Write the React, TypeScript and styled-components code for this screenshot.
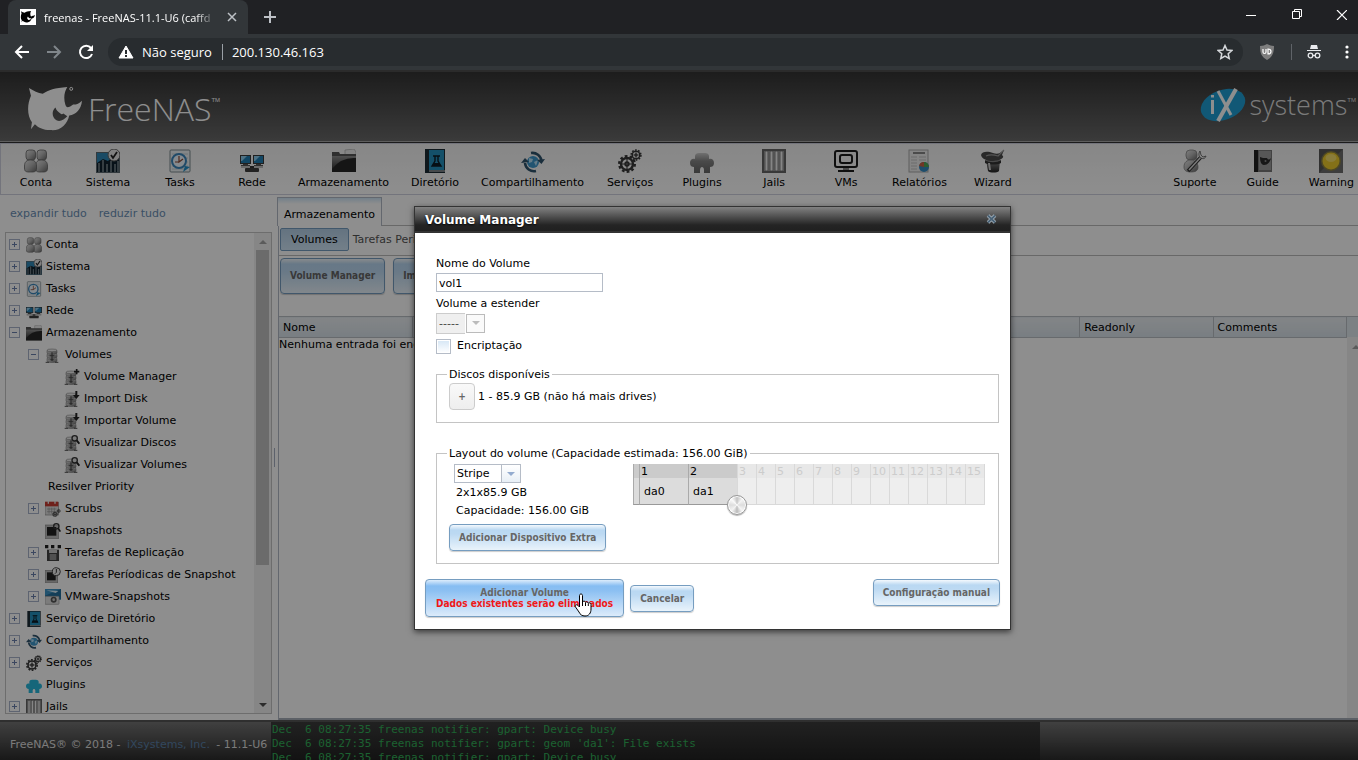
import React from 'react';
import styled, { createGlobalStyle, css } from 'styled-components';

const GlobalStyle = createGlobalStyle`
  *, *::before, *::after { box-sizing: border-box; }
  html, body { margin: 0; height: 100%; }
  body { overflow: hidden; background: #202124; }
  #root { height: 100%; }
  button, input, select { font: inherit; color: inherit; }
  fieldset, legend { margin: 0; }
`;

/* ---------- icons ---------- */

type IconName =
  | 'users' | 'system' | 'tasks' | 'network' | 'folder' | 'book' | 'share' | 'gears'
  | 'plugin' | 'pluginBlue' | 'jails' | 'vm' | 'report' | 'wizard' | 'support' | 'guide' | 'warning'
  | 'disks' | 'disksAdd' | 'disksDown' | 'disksFind' | 'scrubs' | 'snapshot'
  | 'replication' | 'periodic' | 'vmware';

const Person = ({ x }: { x: number }) => (
  <g transform={`translate(${x} 0)`}>
    <rect x="1.500" y="1" width="9.500" height="10" rx="3" fill="url(#silver)" stroke="#666" strokeWidth=".8" />
    <path d="M0 17c0-4 2-6 6-6s6 2 6 6v2c0 4-2 4-6 4s-6 0-6-4z" fill="url(#silver)" stroke="#666" strokeWidth=".8" />
  </g>
);

const Gear = ({ x, y, r }: { x: number; y: number; r: number }) => (
  <g fill="none" stroke="#383838">
    <circle cx={x} cy={y} r={r} strokeWidth={r * 0.4} />
    <circle cx={x} cy={y} r={r * 1.3} strokeWidth={r * 0.4} strokeDasharray={`${r * 0.45} ${r * 0.366}`} />
    <circle cx={x} cy={y} r={r * 0.3} strokeWidth={r * 0.3} />
    <path d={`M${x - r} ${y}H${x + r}M${x} ${y - r}V${y + r}`} strokeWidth={r * 0.18} />
  </g>
);

const Monitor = ({ x }: { x: number }) => (
  <g transform={`translate(${x} 6)`}>
    <rect width="11" height="9" fill="#3a3a3a" />
    <rect x="1" y="1" width="9" height="7" fill="#1f7fb4" />
    <path d="M1 1h6L2 6H1z" fill="#8ccbee" />
    <path d="M3 9h5v1h2v1H1v-1h2z" fill="#555" />
  </g>
);

const Disks = () => (
  <g>
    {[17, 11, 5].map((y) => (
      <g key={y}>
        <path d={`M3 ${y}v4c0 3 15 3 15 0v-4`} fill="url(#silver)" stroke="#777" strokeWidth=".8" />
        <ellipse cx="10.500" cy={y} rx="7.500" ry="2" fill="#eee" stroke="#777" strokeWidth=".8" />
      </g>
    ))}
    <path d="M10.500 8v13M7 13h7M8 19h5" stroke="#444" strokeWidth="1.600" />
    <path d="M1 23h5M15 23h5" stroke="#555" strokeWidth="1.500" />
  </g>
);

const PluginShape = ({ fill }: { fill: string }) => (
  <path d="M5 10V7c0-2 2-3 4-3h6c2 0 4 1 4 3v3c3-1 5 1 5 4s-2 4-4 4v6h-6v-3c0-4-4-4-4 0v3H4v-6c-2 0-4-1-4-4s2-5 5-4z" fill={fill} />
);

const drawings: Record<IconName, React.ReactNode> = {
  users: <><Person x={11.5} /><Person x={.5} /></>,
  system: (
    <>
      <rect y="3" width="24" height="21" fill="#5d6970" />
      <rect x="1" y="4" width="22" height="19" fill="#2f88b5" />
      <path d="M1 14l6-4 5 2 5-5 6 2v14H1z" fill="#10222d" />
      <path d="M3 23v-9M7 23v-12M11 23v-8M15 23v-11M19 23v-8M22 23v-11" stroke="#aebbc2" strokeWidth="1" />
      <circle cx="18" cy="6" r="6" fill="#e6e6e6" stroke="#666" />
      <path d="M15 6l2 3 4-6" stroke="#222" strokeWidth="1.800" fill="none" />
    </>
  ),
  tasks: (
    <>
      <rect x="2" y="1" width="20" height="22" rx="1" fill="#eef3f5" stroke="#7d8b90" />
      <path d="M4 5h16M4 9h16M4 13h16M4 17h16M4 20h12" stroke="#c4d0d6" />
      <circle cx="11" cy="12" r="7" fill="#eff8ff" stroke="#3b86bb" strokeWidth="2" />
      <path d="M11 7v6l4-3M11 13H7" stroke="#8c4b36" strokeWidth="1.200" fill="none" />
      <path d="M15 23l2-6 5 1z" fill="#238fc8" />
    </>
  ),
  network: (
    <>
      <Monitor x={0} /><Monitor x={13} />
      <path d="M1 18h22" stroke="#888" />
      <rect x="5" y="19" width="14" height="4" rx="1" fill="#3e3e3e" />
      <path d="M10 18h4" stroke="#333" strokeWidth="2" />
    </>
  ),
  folder: (
    <>
      <path d="M13 1l9-1 2 3v7H13z" fill="#ececec" stroke="#aaa" strokeWidth=".7" />
      <path d="M0 3h7l1 2h16v18H0z" fill="#555" />
      <path d="M0 23V7h24v16z" fill="url(#dark)" />
      <path d="M0 20Q9 8 24 9v14H0z" fill="#262626" />
    </>
  ),
  book: (
    <>
      <rect x="2" width="20" height="24" fill="#1c2b35" />
      <rect x="6" y="1" width="15" height="20" fill="#2590bd" />
      <path d="M6 22h16" stroke="#ddd" />
      <path d="M10 7h7M12 7v5l-3 5h9l-3-5V7" stroke="#0c1c26" strokeWidth="1.400" fill="none" />
      <path d="M11 14h5l2 3H9z" fill="#0c1c26" />
    </>
  ),
  share: (
    <>
      <circle cx="12" cy="13" r="6" fill="#3d98cc" />
      <path d="M8 9l4 1-1 3-3 1zM13 13l4-2-2 6z" fill="#b5def4" />
      <path d="M10 4a9 9 0 0 1 10.500 8" fill="none" stroke="#30546d" strokeWidth="2.600" />
      <path d="M24 10l-3.500 5-4.500-4z" fill="#30546d" />
      <path d="M15 22A9 9 0 0 1 4 14" fill="none" stroke="#30546d" strokeWidth="2.600" />
      <path d="M0 14l4-5 4 4z" fill="#30546d" />
    </>
  ),
  gears: <><Gear x={9} y={15} r={6} /><Gear x={18} y={6} r={3.800} /></>,
  plugin: <PluginShape fill="url(#silverDark)" />,
  pluginBlue: <PluginShape fill="#28b8dc" />,
  jails: (
    <>
      <rect width="24" height="24" fill="#666" />
      <rect x="2" y="2" width="20" height="20" fill="#b5b5b5" />
      {[3, 8, 13, 18].map((x) => <rect key={x} x={x} y="2" width="3" height="20" fill="#efefef" stroke="#666" strokeWidth=".8" />)}
    </>
  ),
  vm: (
    <g fill="none" stroke="#1b1b1b">
      <rect x="1" y="2" width="22" height="16" rx="2" strokeWidth="2" />
      <rect x="6" y="6" width="12" height="8" rx="2" strokeWidth="2" />
      <path d="M4 22h16" strokeWidth="2" /><path d="M9 20h6" strokeWidth="1" />
    </g>
  ),
  report: (
    <>
      <rect x="2" y="1" width="19" height="22" fill="#ededed" stroke="#aaa" />
      <path d="M6 4h12" stroke="#888" strokeWidth="2" />
      <path d="M4 8h6M12 8h7M4 11h6M12 11h7M4 14h6M4 17h6M4 20h6" stroke="#c2c2c2" />
      <circle cx="17" cy="18" r="5" fill="#368ac1" />
      <path d="M17 18v-5a5 5 0 0 1 5 5z" fill="#53a857" />
      <path d="M17 18l-5-1a5 5 0 0 1 5-4z" fill="#cc6144" />
    </>
  ),
  wizard: (
    <>
      <path d="M5 11l2 11c2 2 9 2 11 0l1-11z" fill="url(#dark)" />
      <path d="M4 11c4 3 12 3 16 0v3c-4 2-12 2-16 0z" fill="#333" />
      <path d="M0 6c1-4 7-4 12-2s7 0 11-3l-2 5c4 3-3 6-9 6S1 10 0 6z" fill="#4a4a4a" />
      <path d="M5 7c4-2 9-1 12 0l6-6" fill="none" stroke="#999" strokeWidth="1.200" />
      <path d="M7 14l1 7h2l-1-7z" fill="#ccc" />
    </>
  ),
  support: (
    <>
      <rect x="3" y="1" width="11" height="10" rx="4" fill="url(#silver)" stroke="#777" strokeWidth=".7" />
      <path d="M1 18c0-5 3-7 7-7s7 3 7 7-3 5-7 5-7-1-7-5z" fill="url(#silver)" stroke="#777" strokeWidth=".7" />
      <path d="M5 22L18 8" stroke="#333" strokeWidth="3.500" />
      <path d="M6 21L18 8" stroke="#ddd" strokeWidth="1.500" />
      <path d="M17 2c-2 3-1 6 1 7s4 1 5-2l-3 1-2-2z" fill="#eee" stroke="#555" strokeWidth=".8" />
    </>
  ),
  guide: (
    <>
      <rect x="3" y="1" width="18" height="22" fill="#777" />
      <rect x="3" y="1" width="4" height="22" fill="#222" />
      <rect x="8" y="2" width="12" height="19" fill="#9c9c9c" />
      <path d="M9 8l3 1h4c1 2 2 2 4 0-1 4-3 7-7 7-3 0-4-4-4-8z" fill="#2a2a2a" />
      <circle cx="14.500" cy="12" r="1" fill="#888" />
    </>
  ),
  warning: (
    <>
      <rect width="24" height="24" fill="#565656" />
      <path d="M0 24L24 0v24z" fill="#6e6e6e" />
      <circle cx="12" cy="12" r="10" fill="#8b8142" />
      <circle cx="12" cy="12" r="8.500" fill="#edcb2b" />
      <ellipse cx="12" cy="9" rx="5.500" ry="4" fill="#f6de68" />
    </>
  ),
  disks: <Disks />,
  disksAdd: <><Disks /><path d="M19 0v8M15 4h8" stroke="#222" strokeWidth="2.500" /></>,
  disksDown: <><Disks /><path d="M17 0h3v6h3.500l-5 6-5-6H17z" fill="#222" /></>,
  disksFind: <><Disks /><circle cx="16" cy="5" r="4" fill="#ddd" stroke="#333" strokeWidth="2" /><path d="M19 8l4 5" stroke="#222" strokeWidth="3" /></>,
  scrubs: (
    <>
      <rect y="2" width="20" height="19" fill="#ddd" stroke="#888" />
      <rect y="1" width="20" height="7" fill="#c83c33" />
      <path d="M5 0v4M15 0v4" stroke="#eee" strokeWidth="2" />
      <path d="M3 12h14M3 16h14M6 10v9M10 10v9M14 10v9" stroke="#999" />
      <Gear x={15} y={20} r={2.800} /><Gear x={20.5} y={15} r={2} />
    </>
  ),
  snapshot: (
    <>
      <rect y="3" width="20" height="21" fill="#bbb" stroke="#888" />
      <rect x="3" y="6" width="14" height="13" fill="#222" />
      <circle cx="17" cy="5" r="4" fill="none" stroke="#333" strokeWidth="2" /><path d="M20 8l3 5" stroke="#222" strokeWidth="2.500" />
    </>
  ),
  replication: (
    <>
      <path d="M0 0h5v5H0zM9 0h5v5H9zM19 0h5v5h-5z" fill="#222" />
      <path d="M3 7h18v17H3z" fill="#444" />
      <path d="M6 7h12v5H6z" fill="#ccc" />
      <path d="M7 15h10M7 18h10M7 21h10" stroke="#ddd" strokeWidth="1.500" />
    </>
  ),
  periodic: (
    <>
      <rect y="5" width="19" height="19" fill="#bbb" stroke="#888" />
      <rect x="3" y="8" width="13" height="12" fill="#222" />
      <circle cx="17" cy="7" r="6" fill="#eee" stroke="#444" strokeWidth="1.500" /><path d="M17 3v5l-2 2" stroke="#333" strokeWidth="1.500" fill="none" />
    </>
  ),
  vmware: (
    <>
      <rect width="24" height="16" fill="#246f9e" /><path d="M0 0h24L0 10z" fill="#3d94c6" /><path d="M2 2l18 1-4 3z" fill="#d7eef9" />
      <rect y="11" width="21" height="12" rx="1" fill="#dedede" stroke="#999" />
      <circle cx="13" cy="16" r="4.500" fill="#555" /><circle cx="13" cy="16" r="2" fill="#ccc" />
    </>
  ),
};

const IconSvg = styled.svg<{ $size: number }>`
  display: block;
  flex: none;
  width: ${(p) => p.$size}px;
  height: ${(p) => p.$size}px;
`;

const Icon = ({ name, size = 24 }: { name: IconName; size?: number }) => (
  <IconSvg $size={size} viewBox="0 0 24 24" aria-hidden="true">{drawings[name]}</IconSvg>
);

const HiddenDefs = styled.svg`
  position: absolute;
  width: 0;
  height: 0;
`;

const Gradients = () => (
  <HiddenDefs aria-hidden="true">
    <defs>
      <linearGradient id="silver" x1="0" y1="0" x2="1" y2="1">
        <stop offset="0" stopColor="#e4e4e4" /><stop offset=".5" stopColor="#b4b4b4" /><stop offset="1" stopColor="#666" />
      </linearGradient>
      <linearGradient id="silverDark" x1="0" y1="0" x2="0" y2="1">
        <stop offset="0" stopColor="#c9c9c9" /><stop offset=".4" stopColor="#858585" /><stop offset="1" stopColor="#666" />
      </linearGradient>
      <linearGradient id="dark" x1="0" y1="0" x2="0" y2="1">
        <stop offset="0" stopColor="#909090" /><stop offset="1" stopColor="#222" />
      </linearGradient>
    </defs>
  </HiddenDefs>
);

/* ---------- browser window ---------- */

const Window = styled.div`
  display: flex;
  flex-direction: column;
  height: 100vh;
  font-family: 'Open Sans', 'Noto Sans', sans-serif;
  color: #fff;
`;

const PlainButton = styled.button`
  display: flex;
  align-items: center;
  justify-content: center;
  padding: 0;
  border: 0;
  background: none;
  svg { display: block; }
`;

const TabStrip = styled.div`
  display: flex;
  flex: none;
  height: 34px;
  padding-left: 8px;
  background: #202124;
`;

const BrowserTab = styled.div`
  display: flex;
  align-items: center;
  width: 240px;
  padding: 0 8px 0 12px;
  gap: 8px;
  border-radius: 8px 8px 0 0;
  background: #323639;
  font-size: 11px;
`;

const Favicon = styled.svg`
  flex: none;
  width: 16px;
  height: 16px;
  background: #fff;
`;

const TabTitle = styled.span`
  flex: 1;
  overflow: hidden;
  white-space: nowrap;
  mask-image: linear-gradient(90deg, #000 88%, transparent);
`;

const IconButton = styled(PlainButton)<{ $w: number }>`
  width: ${(p) => p.$w}px;
  flex: none;
`;

const WindowControls = styled.div`
  display: flex;
  margin-left: auto;
  height: 29px;
`;

const AddressRow = styled.div`
  display: flex;
  flex: none;
  align-items: center;
  height: 36px;
  padding-left: 6px;
  background: #323639;
`;

const AddressBar = styled.div`
  display: flex;
  flex: 1;
  align-items: center;
  height: 28px;
  margin-left: 6px;
  padding: 0 8px 0 10px;
  border-radius: 14px;
  background: #282c2f;
  font-size: 13px;
`;

const NotSecure = styled.label`
  display: flex;
  align-items: center;
  gap: 8px;
  padding-right: 10px;
  border-right: 1px solid #9aa0a6;
  line-height: 16px;
`;

const AddressInput = styled.input`
  flex: 1;
  min-width: 0;
  margin-left: 9px;
  padding: 0;
  border: 0;
  outline: 0;
  background: none;
`;

const Separator = styled.span`
  width: 1px;
  height: 16px;
  background: #5f6368;
`;

const SharkMark = 'M1 1c5 3 9 5 14 6C21 3 27 1 40 0c-3 5-4 11-2 18 1 3 2 3 5 2l3-2c4 0 6-1 9-4-1 9-6 14-13 15-2 9-9 16-19 15-8 0-13-3-16-6l-4 5 1-7C-1 29-1 18 3 9zM28 21c-4 3-4 10 1 13 4 2 8-1 11-4l-4-3c-1 1-2 1-3 0-3-2-4-3-5-6z';

const BrowserChrome = () => (
  <>
    <TabStrip>
      <BrowserTab>
        <Favicon viewBox="-3 -3 62 52" aria-hidden="true"><path d={SharkMark} fill="#000" fillRule="evenodd" /></Favicon>
        <TabTitle>freenas - FreeNAS-11.1-U6 (caffd</TabTitle>
        <IconButton $w={16} aria-label="Fechar guia">
          <svg width="16" height="16"><path d="M4 4l8 8M12 4l-8 8" stroke="#bdc1c6" strokeWidth="1.500" /></svg>
        </IconButton>
      </BrowserTab>
      <IconButton $w={44} aria-label="Nova guia">
        <svg width="14" height="14"><path d="M7 1v12M1 7h12" stroke="#bdc1c6" strokeWidth="2" /></svg>
      </IconButton>
      <WindowControls>
        <IconButton $w={46} aria-label="Minimizar"><svg width="10" height="10"><path d="M0 5.500h10" stroke="#fff" /></svg></IconButton>
        <IconButton $w={46} aria-label="Restaurar"><svg width="11" height="11"><path d="M.5 2.500h7v7h-7zM2.500 2.500v-2h7v7h-2" fill="none" stroke="#fff" /></svg></IconButton>
        <IconButton $w={38} aria-label="Fechar"><svg width="16" height="10"><path d="M6 0l10 10M16 0L6 10" stroke="#fff" strokeWidth="1.200" /></svg></IconButton>
      </WindowControls>
    </TabStrip>
    <AddressRow>
      <IconButton $w={32} aria-label="Voltar"><svg width="16" height="16"><path d="M15 8H2M8 2L2 8l6 6" fill="none" stroke="#fff" strokeWidth="2" /></svg></IconButton>
      <IconButton $w={32} aria-label="Avançar"><svg width="16" height="16"><path d="M1 8h13M8 2l6 6-6 6" fill="none" stroke="#80868b" strokeWidth="2" /></svg></IconButton>
      <IconButton $w={32} aria-label="Recarregar"><svg width="16" height="16"><path d="M13 4a6.200 6.200 0 1 0 1 6" fill="none" stroke="#fff" strokeWidth="2" /><path d="M15 1v6H9z" fill="#fff" /></svg></IconButton>
      <AddressBar>
        <NotSecure htmlFor="address">
          <svg width="16" height="14"><path d="M8 1l7 12H1z" fill="#fff" stroke="#fff" /><path d="M8 5v4M8 10v2" stroke="#282c2f" strokeWidth="2" /></svg>
          Não seguro
        </NotSecure>
        <AddressInput id="address" defaultValue="200.130.46.163" />
        <IconButton $w={20} aria-label="Favoritar"><svg width="16" height="16"><path d="M8 1.500l2 4.500 4.800.5-3.600 3.200 1 4.800L8 12l-4.200 2.500 1-4.800L1.200 6.500 6 6z" fill="none" stroke="#d5d8db" strokeWidth="1.500" /></svg></IconButton>
      </AddressBar>
      <IconButton $w={48} aria-label="uBlock">
        <svg width="16" height="16"><path d="M1 2c3 0 5-1 7-2 2 1 4 2 7 2 0 8-2 11-7 14C3 13 1 10 1 2z" fill="#7e7e7e" /><path d="M4 5v3c0 2 3 2 3 0V5M9 5v5c4 0 4-5 0-5z" fill="none" stroke="#fff" strokeWidth="1.200" /></svg>
      </IconButton>
      <Separator />
      <IconButton $w={44} aria-label="Navegação anônima">
        <svg width="16" height="16"><path d="M5 1h6l1 4H4zM1 6h14v1H1z" fill="#e8eaed" /><g fill="none" stroke="#e8eaed" strokeWidth="1.300"><circle cx="4.500" cy="11.500" r="2.300" /><circle cx="11.500" cy="11.500" r="2.300" /><path d="M6.800 11.500h2.400" /></g></svg>
      </IconButton>
      <IconButton $w={22} aria-label="Menu"><svg width="4" height="16"><circle cx="2" cy="3" r="1.600" fill="#fff" /><circle cx="2" cy="8" r="1.600" fill="#fff" /><circle cx="2" cy="13" r="1.600" fill="#fff" /></svg></IconButton>
    </AddressRow>
  </>
);

/* ---------- FreeNAS page ---------- */

const Page = styled.div`
  position: relative;
  display: flex;
  flex: 1;
  flex-direction: column;
  min-height: 0;
  background: #fff;
  color: #000;
  font: 11px/14px 'DejaVu Sans', sans-serif;
`;

const Banner = styled.header`
  display: flex;
  flex: none;
  justify-content: space-between;
  height: 73px;
  padding: 14px 2px 0 28px;
  border-top: 2px solid #4e4e4e;
  border-bottom: 1px solid #333;
  background: linear-gradient(#343434, #6a6a6a);
  box-shadow: inset 0 -1px #aaa;
`;

const Brand = styled.a`
  display: flex;
  gap: 5px;
  color: #fff;
  text-decoration: none;
  svg { display: block; }
`;

const BrandName = styled.span`
  display: flex;
  font: 300 32px/46px 'Open Sans', sans-serif;
`;

const PartnerName = styled(BrandName)`
  margin-left: -2px;
  line-height: 38px;
  font-size: 27px;
  color: #ddd;
`;

const Trade = styled.sup`
  font: 6px/28px 'Liberation Sans', sans-serif;
`;

const MenuBar = styled.nav`
  display: flex;
  flex: none;
  justify-content: space-between;
  height: 52px;
  border: 1px solid #cfd1de;
  border-right: 0;
  background: linear-gradient(#f3f3f3, #fff);
`;

const MenuGroup = styled.div<{ $end?: boolean }>`
  display: flex;
  ${(p) => p.$end ? css`gap: 30px; padding-right: 4px;` : css`margin-left: -1px;`}
`;

const MenuItem = styled.button<{ $end?: boolean }>`
  display: flex;
  flex-direction: column;
  align-items: center;
  gap: 3px;
  min-width: ${(p) => (p.$end ? 0 : 72)}px;
  padding: 5px ${(p) => (p.$end ? 0 : 10)}px 0;
  border: 0;
  background: none;
`;

const Main = styled.div`
  display: flex;
  flex: 1;
  min-height: 0;
`;

const Sidebar = styled.aside`
  display: flex;
  flex: none;
  flex-direction: column;
  width: 272px;
  padding: 0 0 6px 5px;
`;

const TreeLinks = styled.div`
  display: flex;
  flex: none;
  gap: 12px;
  height: 37px;
  padding: 12px 0 0 5px;
`;

const Link = styled.a`
  color: #6a8fb5;
  text-decoration: none;
`;

const TreeBox = styled.div`
  display: flex;
  flex: 1;
  min-height: 0;
  border: 1px solid #c4c4c4;
`;

const TreeList = styled.ul`
  flex: 1;
  margin: 0;
  padding: 0;
  overflow: hidden;
  list-style: none;
`;

const TreeRow = styled.li<{ $depth: number }>`
  display: flex;
  align-items: center;
  height: 22px;
  padding-left: ${(p) => 3 + p.$depth * 19}px;
  white-space: nowrap;
`;

const ExpanderSlot = styled.span`
  width: 17px;
  flex: none;
`;

const Expander = styled.button<{ $open?: boolean }>`
  display: block;
  width: 11px;
  height: 11px;
  padding: 0;
  border: 1px solid #aab4cc;
  background:
    linear-gradient(#6a80ad, #6a80ad) center / 5px 1px no-repeat,
    linear-gradient(#6a80ad, #6a80ad) center / ${(p) => (p.$open ? 0 : 1)}px 5px no-repeat,
    #fff;
`;

const TreeLabel = styled.span<{ $icon: boolean }>`
  padding: 2px 0 0 ${(p) => (p.$icon ? 4 : 3)}px;
`;

const TreeIcon = styled.span`
  padding-top: 2px;
`;

const ScrollTrack = styled.div`
  display: flex;
  flex: none;
  flex-direction: column;
  align-items: center;
  width: 17px;
  background: #f1f1f1;
`;

const ScrollArrow = styled.span<{ $down?: boolean }>`
  display: flex;
  align-items: center;
  justify-content: center;
  width: 17px;
  height: 17px;
  flex: none;
  &::before {
    content: '';
    border: 4px solid transparent;
    ${(p) => p.$down ? css`border-top-color: #505050; border-bottom: 0;` : css`border-bottom-color: #a3a3a3; border-top: 0;`}
  }
`;

const ScrollThumb = styled.div`
  flex: 316;
  width: 13px;
  background: #c1c1c1;
`;

const ScrollRest = styled.div`
  flex: 132;
`;

const Splitter = styled.div`
  display: flex;
  flex: none;
  align-items: center;
  justify-content: center;
  width: 5px;
  &::before {
    content: '';
    width: 1px;
    height: 19px;
    background: #a6aec0;
  }
`;

const Content = styled.main`
  display: flex;
  flex: 1;
  flex-direction: column;
  min-width: 0;
  padding-top: 2px;
`;

const TopTabs = styled.div`
  display: flex;
  flex: none;
  &::after {
    content: '';
    flex: 1;
    border-bottom: 1px solid #bbb;
  }
`;

const TopTab = styled.button`
  height: 29px;
  padding: 5px 6px 0;
  border: 1px solid #b3bac6;
  border-bottom: 0;
  background: linear-gradient(#cfe5f7, #fff 6px);
`;

const Pane = styled.div`
  display: flex;
  flex: 1;
  flex-direction: column;
  min-height: 0;
  margin-left: 1px;
  border-left: 1px solid #b3bac6;
`;

const SubTabs = styled.div`
  display: flex;
  flex: none;
  height: 30px;
  padding: 2px 1px 0;
  border-bottom: 1px solid #bbb;
`;

const SubTab = styled.button<{ $active?: boolean }>`
  height: 23px;
  padding: 0 ${(p) => (p.$active ? 10 : 3)}px;
  border: 1px solid ${(p) => (p.$active ? '#769dc0' : 'transparent')};
  border-radius: 2px;
  background: ${(p) => (p.$active ? 'linear-gradient(#b4cfe6, #cfe5f7)' : 'none')};
  color: ${(p) => (p.$active ? '#000' : '#555')};
`;

const Button = styled.button<{ $tone?: 'hover' | 'muted'; $h?: number }>`
  height: ${(p) => p.$h ?? 27}px;
  padding: 0 9px 1px;
  border: 1px solid #769dc0;
  border-radius: 4px;
  background: linear-gradient(#f4f9fd, #bad8f2 5px, #bcd9f2 35%, #e9f3fb);
  box-shadow: 0 1px 1px rgba(0, 0, 0, .2);
  color: #666;
  font-family: 'DejaVu Sans Condensed', 'DejaVu Sans', sans-serif;
  font-size: 10px;
  font-weight: 700;
  line-height: 11px;
  white-space: nowrap;
  ${(p) => p.$tone === 'hover' && css`
    padding: 0 10px 1px;
    background: linear-gradient(#dcecfb, #86bdf2 6px, #8cc0f2 30%, #dcebfa);
  `}
  ${(p) => p.$tone === 'muted' && css`
    width: 26px;
    padding: 0 0 1px;
    border-color: #ccc;
    background: linear-gradient(#f9f9f9, #eee);
    box-shadow: none;
  `}
`;

const Actions = styled.div`
  display: flex;
  flex: none;
  gap: 8px;
  height: 60px;
  padding: 2px 1px;
`;

const GridArea = styled.div`
  display: flex;
  flex: 1;
  min-height: 0;
  border-bottom: 2px solid #a5adb8;
`;

const DataTable = styled.table`
  flex: 1;
  align-self: flex-start;
  width: 100%;
  table-layout: fixed;
  border-collapse: collapse;
  th {
    height: 21px;
    padding: 2px 4px 0;
    border: 1px solid #b9bec4;
    border-left: 0;
    background: linear-gradient(#ebeff2, #d8e2ea);
    font-weight: 400;
    text-align: left;
  }
  td {
    padding: 0;
    white-space: nowrap;
  }
`;

const GridScroll = styled.div`
  display: flex;
  flex: none;
  flex-direction: column;
  width: 11px;
  overflow: hidden;
  padding-top: 21px;
  border-top: 1px solid #b9bec4;
  background: linear-gradient(#dfe7ed, #dfe7ed) 0 0 / 100% 20px no-repeat, #f1f1f1;
`;

const Footer = styled.footer`
  display: flex;
  flex: none;
  height: 40px;
  overflow: hidden;
  border-top: 2px solid #555;
  background: linear-gradient(#747474, #2c2c2c);
  color: #ddd;
`;

const Copyright = styled.div`
  flex: none;
  width: 271px;
  padding: 16px 0 0 10px;
  white-space: nowrap;
`;

const FooterLink = styled(Link)`
  margin: 0 3px;
  color: #5a80a8;
`;

const Console = styled.pre`
  width: 769px;
  margin: 0;
  padding: 1px 0 0 1px;
  overflow: hidden;
  background: linear-gradient(#3c3c3c, #222);
  color: #32b058;
  font: 11px/14px 'DejaVu Sans Mono', monospace;
`;

const Backdrop = styled.div`
  position: absolute;
  inset: 0;
  background: rgba(0, 0, 0, .443);
`;

/* ---------- dialog ---------- */

const Dialog = styled.section`
  position: absolute;
  top: 136px;
  left: 414px;
  width: 597px;
  border: 1px solid #333;
  background: #fff;
  box-shadow: 0 2px 6px rgba(0, 0, 0, .6);
`;

const DialogTitle = styled.header`
  display: flex;
  align-items: center;
  justify-content: space-between;
  height: 26px;
  padding: 0 13px 1px 10px;
  border-bottom: 2px solid #333;
  background: linear-gradient(#828282, #242424 75%, #202020);
  color: #fff;
  h1 {
    margin: 0;
    padding-top: 2px;
    font-size: 12px;
    line-height: 16px;
    text-shadow: 0 1px 2px #000;
  }
`;

const DialogForm = styled.form`
  display: flex;
  flex-direction: column;
  padding: 24px 10px 12px;
`;

const Fields = styled.div`
  display: flex;
  flex-direction: column;
  align-items: flex-start;
  padding-left: 11px;
`;

const FieldLabel = styled.label`
  line-height: 14px;
`;

const TextInput = styled.input`
  width: 167px;
  height: 19px;
  margin: 2px 0 5px;
  padding: 1px 2px 0;
  border: 1px solid #b5bcc7;
  outline: 0;
`;

const SelectBox = styled.span<{ $disabled?: boolean }>`
  position: relative;
  display: flex;
  &::before {
    content: '';
    position: absolute;
    top: 1px;
    right: 1px;
    bottom: 1px;
    width: 19px;
    border-left: 1px solid ${(p) => (p.$disabled ? '#d3d3d3' : '#b5bcc7')};
    background: ${(p) => (p.$disabled ? '#fafafa' : 'linear-gradient(#fff, #e8eff6)')};
    ${(p) => p.$disabled && css`border: 1px solid #bbb; box-shadow: 0 0 0 1px #fff;`}
    pointer-events: none;
  }
  &::after {
    content: '';
    position: absolute;
    top: 8px;
    right: 6px;
    border: 4px solid transparent;
    border-top-color: ${(p) => (p.$disabled ? '#bbb' : '#93abcf')};
    border-bottom: 0;
    pointer-events: none;
  }
`;

const Select = styled.select<{ $w: number }>`
  appearance: none;
  width: ${(p) => p.$w}px;
  height: 19px;
  padding: 1px 2px 0;
  border: 1px solid #b5bcc7;
  border-radius: 0;
  background: #fff;
  opacity: 1;
  &:disabled {
    height: 21px;
    border-color: #ccc;
    background: #efefef;
    color: #444;
  }
`;

const CheckRow = styled.label`
  display: flex;
  gap: 6px;
  margin-top: 5px;
`;

const CheckBox = styled.input`
  appearance: none;
  width: 15px;
  height: 15px;
  margin: 0;
  border: 1px solid #b5bcc7;
  background: linear-gradient(#d5e6f5, #fff);
  box-shadow: inset 0 0 0 1px #fff;
`;

const Group = styled.fieldset<{ $h: number }>`
  min-width: 0;
  height: ${(p) => p.$h}px;
  margin: 0 1px 0 11px;
  padding: 0 12px;
  border: 1px solid #c4c4c4;
  legend {
    margin-left: -2px;
    padding: 2px 2px 0;
    line-height: 14px;
  }
`;

const DiskRow = styled.div`
  display: flex;
  align-items: center;
  gap: 3px;
  margin-top: 1px;
`;

const LayoutRow = styled.div`
  display: flex;
  align-items: flex-start;
  justify-content: space-between;
  margin-top: 3px;
  padding-right: 1px;
`;

const VdevInfo = styled.div`
  display: flex;
  flex-direction: column;
  align-items: flex-start;
  gap: 2px;
  padding: 0 5px;
  > p { margin: 0 0 0 2px; line-height: 16px; }
`;

const Slots = styled.div`
  position: relative;
  display: flex;
  height: 41px;
  border-right: 1px solid #d9d9d9;
`;

const Slot = styled.div<{ $used?: boolean; $w: number }>`
  display: flex;
  flex-direction: column;
  width: ${(p) => p.$w}px;
  border-left: 1px solid ${(p) => (p.$used ? '#aaa' : '#d9d9d9')};
  border-bottom: 1px solid ${(p) => (p.$used ? '#999' : '#d9d9d9')};
  background: ${(p) => (p.$used ? '#dcdcdc' : '#eee')};
  color: ${(p) => (p.$used ? '#000' : '#ccc')};
  > b {
    height: 14px;
    padding: 1px 1px 0;
    background: ${(p) => (p.$used ? '#cbcbcb' : '#e8e8e8')};
    font-weight: 400;
    line-height: 14px;
  }
  > span { padding: 7px 4px 0; }
`;

const Knob = styled.button`
  position: absolute;
  left: 94px;
  top: 31px;
  width: 20px;
  height: 20px;
  padding: 0;
  border: 1px solid #999;
  border-radius: 50%;
  background: conic-gradient(#c4c4c4, #f3f3f3 12%, #ddd 25%, #f5f5f5 38%, #bbb 50%, #f3f3f3 62%, #ddd 75%, #fafafa 88%, #c4c4c4);
  box-shadow: 0 1px 1px rgba(0, 0, 0, .3), inset 0 0 0 1px #fff;
`;

const DialogActions = styled.div`
  display: flex;
  align-items: flex-start;
  gap: 6px;
  margin-top: 15px;
  > :nth-child(2) { margin-top: 6px; }
  > :last-child { margin-left: auto; }
`;

const Danger = styled.span`
  display: block;
  color: #f01818;
`;

const Hand = styled.svg`
  position: absolute;
  top: 386px;
  left: 159px;
  width: 18px;
  height: 24px;
  pointer-events: none;
`;

const GroupOffset = styled.div<{ $top: number }>`
  margin-top: ${(p) => p.$top}px;
`;

const mainMenu: [IconName, string][] = [
  ['users', 'Conta'], ['system', 'Sistema'], ['tasks', 'Tasks'], ['network', 'Rede'],
  ['folder', 'Armazenamento'], ['book', 'Diretório'], ['share', 'Compartilhamento'],
  ['gears', 'Serviços'], ['plugin', 'Plugins'], ['jails', 'Jails'], ['vm', 'VMs'],
  ['report', 'Relatórios'], ['wizard', 'Wizard'],
];

const sideMenu: [IconName, string][] = [['support', 'Suporte'], ['guide', 'Guide'], ['warning', 'Warning']];

type TreeNode = { label: string; depth: number; icon?: IconName; state?: 'open' | 'closed' };

const tree: TreeNode[] = [
  { label: 'Conta', depth: 0, icon: 'users', state: 'closed' },
  { label: 'Sistema', depth: 0, icon: 'system', state: 'closed' },
  { label: 'Tasks', depth: 0, icon: 'tasks', state: 'closed' },
  { label: 'Rede', depth: 0, icon: 'network', state: 'closed' },
  { label: 'Armazenamento', depth: 0, icon: 'folder', state: 'open' },
  { label: 'Volumes', depth: 1, icon: 'disks', state: 'open' },
  { label: 'Volume Manager', depth: 2, icon: 'disksAdd' },
  { label: 'Import Disk', depth: 2, icon: 'disksDown' },
  { label: 'Importar Volume', depth: 2, icon: 'disksDown' },
  { label: 'Visualizar Discos', depth: 2, icon: 'disksFind' },
  { label: 'Visualizar Volumes', depth: 2, icon: 'disksFind' },
  { label: 'Resilver Priority', depth: 1 },
  { label: 'Scrubs', depth: 1, icon: 'scrubs', state: 'closed' },
  { label: 'Snapshots', depth: 1, icon: 'snapshot' },
  { label: 'Tarefas de Replicação', depth: 1, icon: 'replication', state: 'closed' },
  { label: 'Tarefas Períodicas de Snapshot', depth: 1, icon: 'periodic', state: 'closed' },
  { label: 'VMware-Snapshots', depth: 1, icon: 'vmware', state: 'closed' },
  { label: 'Serviço de Diretório', depth: 0, icon: 'book', state: 'closed' },
  { label: 'Compartilhamento', depth: 0, icon: 'share', state: 'closed' },
  { label: 'Serviços', depth: 0, icon: 'gears', state: 'closed' },
  { label: 'Plugins', depth: 0, icon: 'pluginBlue' },
  { label: 'Jails', depth: 0, icon: 'jails', state: 'closed' },
];

const columns = ['Nome', '', '', '', '', '', 'Readonly', 'Comments'];

const consoleLines = [
  "Dec  6 08:27:35 freenas notifier: gpart: Device busy",
  "Dec  6 08:27:35 freenas notifier: gpart: geom 'da1': File exists",
  "Dec  6 08:27:35 freenas notifier: gpart: Device busy",
];

const emptySlots = Array.from({ length: 13 }, (_, i) => i + 3);

const VolumeDialog = () => (
  <Dialog role="dialog" aria-labelledby="dialog-title">
    <DialogTitle>
      <h1 id="dialog-title">Volume Manager</h1>
      <PlainButton aria-label="Fechar janela">
        <svg width="11" height="10"><path d="M2 1.500l7 7M9 1.500l-7 7" stroke="#a9b4bd" strokeWidth="3.500" /><path d="M2 1.500l7 7M9 1.500l-7 7" stroke="#4a6377" strokeWidth="1.800" /></svg>
      </PlainButton>
    </DialogTitle>
    <DialogForm onSubmit={(e) => e.preventDefault()}>
      <Fields>
        <FieldLabel htmlFor="volume-name">Nome do Volume</FieldLabel>
        <TextInput id="volume-name" defaultValue="vol1" />
        <FieldLabel htmlFor="volume-extend">Volume a estender</FieldLabel>
        <GroupOffset $top={2}>
          <SelectBox $disabled>
            <Select id="volume-extend" $w={50} disabled><option>-----</option></Select>
          </SelectBox>
        </GroupOffset>
        <CheckRow><CheckBox type="checkbox" />Encriptação</CheckRow>
      </Fields>
      <GroupOffset $top={12}>
        <Group $h={57}>
          <legend>Discos disponíveis</legend>
          <DiskRow>
            <Button type="button" $tone="muted" aria-label="Adicionar disco">+</Button>
            1 - 85.9 GB (não há mais drives)
          </DiskRow>
        </Group>
      </GroupOffset>
      <GroupOffset $top={22}>
        <Group $h={119}>
          <legend>Layout do volume (Capacidade estimada: 156.00 GiB)</legend>
          <LayoutRow>
            <VdevInfo>
              <SelectBox>
                <Select $w={67} aria-label="Tipo de layout"><option>Stripe</option></Select>
              </SelectBox>
              <p>2x1x85.9 GB</p>
              <p>Capacidade: 156.00 GiB</p>
            </VdevInfo>
            <Slots>
              <Slot $used $w={6}><b /></Slot>
              <Slot $used $w={49}><b>1</b><span>da0</span></Slot>
              <Slot $used $w={49}><b>2</b><span>da1</span></Slot>
              {emptySlots.map((n) => <Slot key={n} $w={19}><b>{n}</b></Slot>)}
              <Knob type="button" aria-label="Redimensionar" />
            </Slots>
          </LayoutRow>
          <GroupOffset $top={5}>
            <Button type="button">Adicionar Dispositivo Extra</Button>
          </GroupOffset>
        </Group>
      </GroupOffset>
      <DialogActions>
        <Button type="submit" $tone="hover" $h={38}>
          Adicionar Volume
          <Danger>Dados existentes serão eliminados</Danger>
        </Button>
        <Button type="button">Cancelar</Button>
        <Button type="button">Configuração manual</Button>
      </DialogActions>
    </DialogForm>
    <Hand viewBox="0 0 18 24" aria-hidden="true">
      <path d="M5.500 14V2.500c0-2 3-2 3 0V9c.5-1.500 3-1 3 .5.500-1 2.500-.8 2.800.7.600-.8 2.700-.5 2.700 1.300V16c0 4-2 7-6 7-3 0-5-1.500-6-4l-3.500-5c-1-2 1-3 2.500-1.500z" fill="#fff" stroke="#000" strokeLinejoin="round" />
      <path d="M8.500 9v4M11.500 10v3M14.300 10.500V13" stroke="#000" fill="none" />
    </Hand>
  </Dialog>
);

export default function App() {
  return (
    <Window>
      <GlobalStyle />
      <Gradients />
      <BrowserChrome />
      <Page>
        <Banner>
          <Brand href="#" aria-label="FreeNAS">
            <svg width="55" height="46" viewBox="0 0 56 45"><path d={SharkMark} fill="#fff" fillRule="evenodd" /><circle cx="44" cy="2" r="1.500" fill="none" stroke="#fff" /></svg>
            <BrandName>FreeNAS<Trade>TM</Trade></BrandName>
          </Brand>
          <Brand href="#" aria-label="iXsystems">
            <svg width="46" height="38" viewBox="0 0 46 38">
              <ellipse cx="23" cy="19" rx="23" ry="15" transform="rotate(-20 23 19)" fill="#1f9fd4" />
              <path d="M12.500 14v14M12.500 9v2.500" stroke="#fff" strokeWidth="3" />
              <path d="M18 5l13 24" stroke="#fff" strokeWidth="3" />
              <path d="M36 3L18 35" stroke="#fff" strokeWidth="4" />
            </svg>
            <PartnerName>systems<Trade>TM</Trade></PartnerName>
          </Brand>
        </Banner>
        <MenuBar>
          <MenuGroup>
            {mainMenu.map(([icon, label]) => <MenuItem key={label}><Icon name={icon} />{label}</MenuItem>)}
          </MenuGroup>
          <MenuGroup $end>
            {sideMenu.map(([icon, label]) => <MenuItem key={label} $end><Icon name={icon} />{label}</MenuItem>)}
          </MenuGroup>
        </MenuBar>
        <Main>
          <Sidebar>
            <TreeLinks>
              <Link href="#">expandir tudo</Link>
              <Link href="#">reduzir tudo</Link>
            </TreeLinks>
            <TreeBox>
              <TreeList>
                {tree.map((n) => (
                  <TreeRow key={n.label} $depth={n.depth}>
                    <ExpanderSlot>{n.state && <Expander $open={n.state === 'open'} aria-label={n.label} />}</ExpanderSlot>
                    {n.icon && <TreeIcon><Icon name={n.icon} size={16} /></TreeIcon>}
                    <TreeLabel $icon={!!n.icon}>{n.label}</TreeLabel>
                  </TreeRow>
                ))}
              </TreeList>
              <ScrollTrack>
                <ScrollArrow />
                <ScrollThumb />
                <ScrollRest />
                <ScrollArrow $down />
              </ScrollTrack>
            </TreeBox>
          </Sidebar>
          <Splitter />
          <Content>
            <TopTabs><TopTab>Armazenamento</TopTab></TopTabs>
            <Pane>
              <SubTabs>
                <SubTab $active>Volumes</SubTab>
                <SubTab>Tarefas Periódicas</SubTab>
              </SubTabs>
              <Actions>
                <Button $h={36}>Volume Manager</Button>
                <Button $h={36}>Importar Disco</Button>
              </Actions>
              <GridArea>
                <DataTable>
                  <thead><tr>{columns.map((c, i) => <th key={i} scope="col">{c}</th>)}</tr></thead>
                  <tbody><tr><td colSpan={8}>Nenhuma entrada foi encontrada</td></tr></tbody>
                </DataTable>
                <GridScroll><ScrollArrow /></GridScroll>
              </GridArea>
            </Pane>
          </Content>
        </Main>
        <Footer>
          <Copyright>FreeNAS® © 2018 - <FooterLink href="#">iXsystems, Inc.</FooterLink> - 11.1-U6</Copyright>
          <Console>{consoleLines.join('\n')}</Console>
        </Footer>
        <Backdrop />
        <VolumeDialog />
      </Page>
    </Window>
  );
}
